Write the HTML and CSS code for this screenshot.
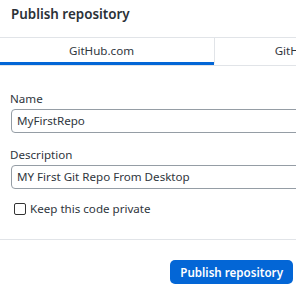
FILE: index.html
```html
<!DOCTYPE html>
<html>
<head>
<meta charset="utf-8">
<link rel="stylesheet" href="styles.css">
</head>
<body>
<div class="dialog">
  <div class="header">Publish repository</div>
  <div class="tabs">
    <div class="tab selected">GitHub.com</div>
    <div class="tab">GitHub Enterprise</div>
  </div>
  <div class="form">
    <div class="group">
      <label class="label">Name</label>
      <div class="input">MyFirstRepo</div>
    </div>
    <div class="group">
      <label class="label">Description</label>
      <div class="input">MY First Git Repo From Desktop</div>
    </div>
    <label class="check-row"><span class="check"></span>Keep this code private</label>
  </div>
  <div class="footer">
    <button class="primary">Publish repository</button>
  </div>
</div>
</body>
</html>
```
FILE: styles.css
```css
html, body {
  margin: 0;
  padding: 0;
  background: #fff;
  overflow: hidden;
}
body {
  font-family: "Noto Sans", "Open Sans", sans-serif;
  font-size: 11.6px;
  color: #2f363d;
}
.dialog {
  width: 296px;
  height: 294px;
  overflow: hidden;
}
.header {
  height: 37px;
  box-sizing: border-box;
  padding: 4px 0 0 11px;
  font-size: 13.4px;
  line-height: 20px;
  font-weight: 600;
  color: #2b3137;
}
.tabs {
  display: flex;
  width: 428px;
  border-top: 1px solid #e1e4e8;
  border-bottom: 1px solid #e1e4e8;
}
.tab {
  width: 214px;
  height: 27px;
  box-sizing: border-box;
  padding-top: 2px;
  line-height: 22px;
  text-align: center;
  border-bottom: 3px solid transparent;
}
.tab.selected {
  padding-right: 11px;
  border-bottom-color: #0366d6;
}
.tab + .tab {
  border-left: 1px solid #e1e4e8;
  padding-left: 4px;
}
.form {
  width: 428px;
  box-sizing: border-box;
  padding: 25px 10px 22px 11px;
}
.group + .group {
  margin-top: 14px;
}
.label {
  display: block;
  line-height: 16px;
  margin-bottom: 2px;
  margin-left: -1px;
}
.input {
  height: 24px;
  box-sizing: border-box;
  border: 1px solid #959da5;
  border-radius: 4px;
  padding: 0 5px;
  line-height: 22px;
}
.check-row {
  display: flex;
  align-items: center;
  margin-top: 12px;
  margin-left: 3px;
  line-height: 16px;
}
.check {
  width: 12px;
  height: 12px;
  box-sizing: border-box;
  border: 1px solid #333;
  border-radius: 2px;
  margin-right: 4px;
}
.footer {
  border-top: 1px solid #e1e4e8;
  display: flex;
  justify-content: flex-end;
  padding: 20px 3px 0 0;
}
.primary {
  height: 24px;
  padding: 0 10px;
  border: none;
  border-radius: 5px;
  background: #0366d6;
  color: #fff;
  font-family: inherit;
  font-size: 11.6px;
  font-weight: 600;
}
```
